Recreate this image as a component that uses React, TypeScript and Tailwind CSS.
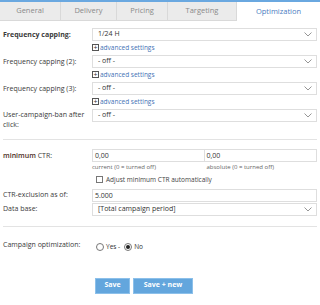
import { useState } from 'react';

const tabs = [
  { name: 'General', w: 'w-[61px]' },
  { name: 'Delivery', w: 'w-[56px]' },
  { name: 'Pricing', w: 'w-[51px]' },
  { name: 'Targeting', w: 'w-[69px]' },
  { name: 'Optimization', w: 'flex-1' },
];

function Chevron() {
  return (
    <svg width="8" height="5" viewBox="0 0 8 5" className="shrink-0">
      <path d="M0.5 0.5 L4 4 L7.5 0.5" fill="none" stroke="#8a8a8a" strokeWidth="0.9" />
    </svg>
  );
}

function Select({ value }: { value: string }) {
  return (
    <div className="h-[13px] flex items-center justify-between border border-[#dedede] bg-white pl-[5px] pr-[4px] text-[7px] text-[#333]">
      <span>{value}</span>
      <Chevron />
    </div>
  );
}

function AdvancedLink() {
  return (
    <div className="h-[13px] flex items-center gap-[1px] text-[6.5px] text-[#3f72b5]">
      <span className="w-[7px] h-[7px] border border-[#555] flex items-center justify-center text-[7px] leading-none text-[#333]">+</span>
      <span>advanced settings</span>
    </div>
  );
}

function Label({ children, className = '' }: { children: React.ReactNode; className?: string }) {
  return <div className={`w-[89px] shrink-0 text-[7px] text-[#3a3a3a] ${className}`}>{children}</div>;
}

export default function App() {
  const [optimize, setOptimize] = useState('no');
  const [adjust, setAdjust] = useState(false);

  return (
    <div className="w-[320px] h-[305px] bg-white overflow-hidden" style={{ fontFamily: '"Open Sans", "Liberation Sans", sans-serif' }}>
      <div className="flex h-[21px] border-t-[2px] border-[#6aa8e0]">
        {tabs.map((t) => {
          const active = t.name === 'Optimization';
          return (
            <div
              key={t.name}
              className={`${t.w} flex items-center justify-center text-[7.5px] ${
                active
                  ? 'bg-white text-[#4a7cbf]'
                  : 'bg-[#ebebeb] text-[#8a8a8a] border-r border-b border-[#d9d9d9]'
              }`}
            >
              {t.name}
            </div>
          );
        })}
      </div>

      <div className="pl-[3px] pr-[3px] pt-[7px]">
        <div className="flex flex-col gap-[1px]">
          {[
            { label: 'Frequency capping:', value: '1/24 H', bold: true },
            { label: 'Frequency capping (2):', value: '- off -' },
            { label: 'Frequency capping (3):', value: '- off -' },
          ].map((r) => (
            <div key={r.label} className="flex">
              <Label className={`pt-[2px] ${r.bold ? 'font-bold text-[#1f2a44]' : ''}`}>{r.label}</Label>
              <div className="flex-1">
                <Select value={r.value} />
                <AdvancedLink />
              </div>
            </div>
          ))}
          <div className="flex">
            <Label className="leading-[10px] pt-[1px]">User-campaign-ban after click:</Label>
            <div className="flex-1">
              <Select value="- off -" />
            </div>
          </div>
        </div>

        <div className="mt-[9px] border-t border-[#e3e3e3]" />

        <div className="mt-[9px] flex">
          <Label className="pt-[2px]">
            <span className="font-semibold text-[#4a2a1a]">minimum</span> CTR:
          </Label>
          <div className="flex-1">
            <div className="flex">
              <div className="flex-1">
                <div className="h-[13px] border border-[#dedede] px-[2px] text-[7px] leading-[11px] text-[#333]">0,00</div>
                <div className="text-[6px] text-[#666] mt-[1px]">current (0 = turned off)</div>
              </div>
              <div className="flex-1">
                <div className="h-[13px] border border-l-0 border-[#dedede] px-[2px] text-[7px] leading-[11px] text-[#333]">0,00</div>
                <div className="text-[6px] text-[#666] mt-[1px] pl-[2px]">absolute (0 = turned off)</div>
              </div>
            </div>
            <label className="mt-[3px] flex items-center gap-[3px] pl-[4px] text-[6.5px] text-[#444]">
              <input
                type="checkbox"
                checked={adjust}
                onChange={() => setAdjust(!adjust)}
                className="appearance-none w-[7px] h-[7px] border border-[#777] bg-white m-0"
              />
              Adjust minimum CTR automatically
            </label>
          </div>
        </div>

        <div className="mt-[4px] flex items-center">
          <Label>CTR-exclusion as of:</Label>
          <div className="flex-1 h-[13px] border border-[#dedede] px-[2px] text-[7px] leading-[11px] text-[#333]">5.000</div>
        </div>
        <div className="mt-[1px] flex items-center">
          <Label>Data base:</Label>
          <div className="flex-1">
            <Select value="[Total campaign period]" />
          </div>
        </div>

        <div className="mt-[10px] border-t border-[#e3e3e3]" />

        <div className="mt-[13px] flex items-center">
          <Label className="text-[#1f2a44]">Campaign optimization:</Label>
          <div className="flex items-center gap-[2px] pl-[4px] text-[6.5px] text-[#333] pt-[2px]">
            <button
              onClick={() => setOptimize('yes')}
              className="w-[8px] h-[8px] rounded-full border border-[#777] bg-white flex items-center justify-center"
            >
              {optimize === 'yes' && <span className="w-[4px] h-[4px] rounded-full bg-[#222]" />}
            </button>
            <span className="mr-[2px]">Yes -</span>
            <button
              onClick={() => setOptimize('no')}
              className="w-[8px] h-[8px] rounded-full border border-[#777] bg-white flex items-center justify-center"
            >
              {optimize === 'no' && <span className="w-[4px] h-[4px] rounded-full bg-[#222]" />}
            </button>
            <span>No</span>
          </div>
        </div>

        <div className="mt-[26px] flex gap-[3px] pl-[92px]">
          <button className="w-[35px] h-[16px] bg-[#63a6dd] border border-[#8cc0ea] text-white text-[7px] font-bold">Save</button>
          <button className="w-[60px] h-[16px] bg-[#63a6dd] border border-[#8cc0ea] text-white text-[7px] font-bold">Save + new</button>
        </div>
      </div>
    </div>
  );
}
